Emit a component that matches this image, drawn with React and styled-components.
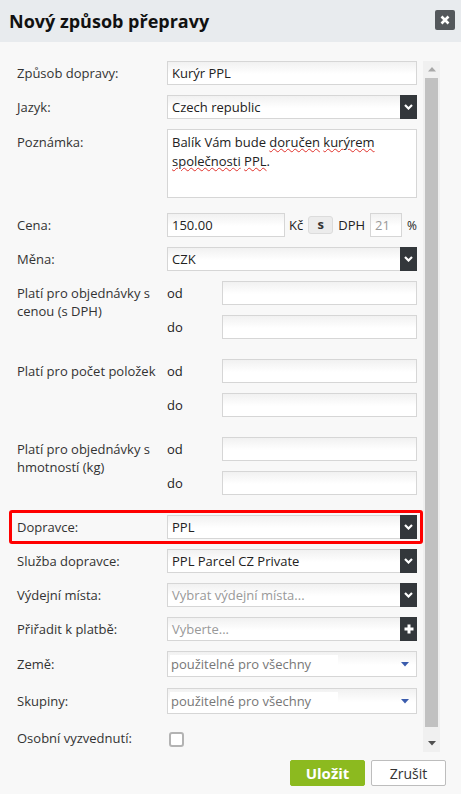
import React from "react";
import styled, { createGlobalStyle } from "styled-components";

const GlobalStyle = createGlobalStyle`
  html, body { margin: 0; padding: 0; background: #f8f8f8; }
  body { font-family: "Open Sans", "Noto Sans", sans-serif; color: #333; }
  * { box-sizing: border-box; }
`;

const Dialog = styled.div`
  width: 461px;
  height: 794px;
  background: #f8f8f8;
  display: flex;
  flex-direction: column;
`;

const Header = styled.header`
  height: 42px;
  flex: none;
  background: #e8ebee;
  display: flex;
  align-items: center;
  justify-content: space-between;
  padding: 0 6px 0 9px;
`;

const Title = styled.h1`
  margin: 0;
  font-size: 18px;
  font-weight: 700;
  color: #111;
`;

const CloseButton = styled.button`
  width: 20px;
  height: 20px;
  padding: 0;
  border: 0;
  border-radius: 2px;
  background: #54585c;
  display: flex;
  align-items: center;
  justify-content: center;
  margin-top: -2px;
`;

const Body = styled.div`
  display: flex;
  margin-top: 19px;
  height: 691px;
  padding-right: 21px;
`;

const Form = styled.div`
  flex: 1;
  padding: 0 6px 0 17px;
  display: flex;
  flex-direction: column;
`;

const Row = styled.div`
  display: grid;
  grid-template-columns: 150px 250px;
  margin-top: ${(p) => (p.$gap ?? 10)}px;
  &:first-child { margin-top: 0; }
`;

const Label = styled.label`
  font-size: 13px;
  line-height: 18px;
  padding-top: ${(p) => p.$pt ?? 3}px;
  color: #333;
`;

const fieldBg = "linear-gradient(to bottom, #f1f1f1 0%, #ffffff 55%)";

const TextInput = styled.input`
  width: ${(p) => p.$w ?? 250}px;
  height: 24px;
  border: 1px solid #d6d6d6;
  border-radius: 0;
  background: ${fieldBg};
  padding: 0 4px;
  font-family: inherit;
  font-size: 13px;
  color: ${(p) => (p.$muted ? "#999" : "#222")};
  outline: none;
  &::placeholder { color: #999; }
`;

const TextArea = styled.div`
  height: 69px;
  border: 1px solid #d6d6d6;
  background: #fff;
  padding: 3px 4px;
  font-size: 13px;
  line-height: 19px;
  color: #222;
`;

const Misspelled = styled.span`
  text-decoration: underline wavy #e0302a;
  text-decoration-thickness: 1px;
  text-underline-offset: 1px;
`;

const Select = styled.div`
  display: flex;
  height: 24px;
  border: 1px solid #d6d6d6;
  background: ${fieldBg};
`;

const SelectValue = styled.span`
  flex: 1;
  padding: 0 4px;
  line-height: 22px;
  font-size: 13px;
  color: ${(p) => (p.$placeholder ? "#999" : "#222")};
  white-space: nowrap;
  overflow: hidden;
`;

const SelectButton = styled.span`
  width: 17px;
  margin: -1px -1px -1px 0;
  background: #33373b;
  display: flex;
  align-items: center;
  justify-content: center;
`;

const PriceLine = styled.div`
  display: flex;
  align-items: center;
  font-size: 13px;
  color: #222;
`;

const Unit = styled.span`
  margin-left: ${(p) => p.$ml ?? 5}px;
  font-size: ${(p) => p.$size ?? 13}px;
`;

const SmallButton = styled.span`
  margin-left: 5px;
  width: 26px;
  height: 18px;
  border: 1px solid #dcdcdc;
  border-radius: 3px;
  background: #ececec;
  font-weight: 700;
  font-size: 13px;
  line-height: 15px;
  text-align: center;
  color: #333;
`;

const RangeList = styled.div`
  display: flex;
  flex-direction: column;
  gap: 10px;
`;

const RangeRow = styled.div`
  display: grid;
  grid-template-columns: 55px 195px;
  align-items: center;
`;

const RangeLabel = styled.span`
  font-size: 13px;
  color: #222;
`;

const Highlight = styled.div`
  margin: 15px -6px -5px -8px;
  border: 3px solid #ff0000;
  border-radius: 3px;
  padding: 2px 3px 2px 5px;
`;

const Chosen = styled.div`
  height: 26px;
  border: 1px solid #d6d6d6;
  background: ${fieldBg};
  display: flex;
  align-items: center;
  padding: 0 7px 0 2px;
`;

const ChosenInput = styled.span`
  width: 168px;
  height: 19px;
  background: #fff;
  color: #777;
  font-size: 13px;
  line-height: 19px;
  padding-left: 1px;
  white-space: nowrap;
`;

const ChosenArrow = styled.span`
  margin-left: auto;
  display: flex;
`;

const Checkbox = styled.span`
  display: block;
  width: 15px;
  height: 15px;
  margin: 6px 0 0 2px;
  border: 2px solid #b3b3b3;
  border-radius: 3px;
  background: #fff;
`;

const Scrollbar = styled.div`
  width: 17px;
  flex: none;
  background: #f0f0f0;
  display: flex;
  flex-direction: column;
  align-items: center;
`;

const ScrollArrow = styled.div`
  height: 17px;
  width: 100%;
  display: flex;
  align-items: center;
  justify-content: center;
`;

const ScrollThumb = styled.div`
  width: 13px;
  height: 649px;
  background: #c1c1c1;
`;

const ScrollSpacer = styled.div`
  flex: 1;
`;

const Footer = styled.footer`
  display: flex;
  justify-content: flex-end;
  gap: 6px;
  padding: 8px 15px 0 0;
`;

const Button = styled.button`
  width: 75px;
  height: 26px;
  border-radius: 2px;
  font-family: inherit;
  cursor: pointer;
  border: 1px solid ${(p) => (p.$primary ? "#8cba1f" : "#bdbdbd")};
  background: ${(p) => (p.$primary ? "#8cba1f" : "#fff")};
  color: ${(p) => (p.$primary ? "#fff" : "#333")};
  font-weight: ${(p) => (p.$primary ? 700 : 400)};
  font-size: ${(p) => (p.$primary ? 15 : 14)}px;
  padding: 0;
`;

const Chevron = () => (
  <svg width="9" height="6" viewBox="0 0 9 6">
    <polyline points="1,1 4.5,4.5 8,1" fill="none" stroke="#fff" strokeWidth="2.2" />
  </svg>
);

const Plus = () => (
  <svg width="10" height="10" viewBox="0 0 10 10">
    <path d="M5 0.5V9.5M0.5 5H9.5" stroke="#fff" strokeWidth="3" />
  </svg>
);

const Triangle = ({ dir = "down", color }) => (
  <svg width="8" height="5" viewBox="0 0 8 5">
    {dir === "down" ? (
      <polygon points="0,0 8,0 4,4.5" fill={color} />
    ) : (
      <polygon points="0,4.5 8,4.5 4,0" fill={color} />
    )}
  </svg>
);

const SelectField = ({ value, placeholder, icon = "chevron" }) => (
  <Select>
    <SelectValue $placeholder={!!placeholder}>{value || placeholder}</SelectValue>
    <SelectButton>{icon === "plus" ? <Plus /> : <Chevron />}</SelectButton>
  </Select>
);

const ChosenField = ({ text }) => (
  <Chosen>
    <ChosenInput>{text}</ChosenInput>
    <ChosenArrow>
      <Triangle dir="down" color="#3b5cad" />
    </ChosenArrow>
  </Chosen>
);

const Range = () => (
  <RangeList>
    <RangeRow>
      <RangeLabel>od</RangeLabel>
      <TextInput $w={195} readOnly />
    </RangeRow>
    <RangeRow>
      <RangeLabel>do</RangeLabel>
      <TextInput $w={195} readOnly />
    </RangeRow>
  </RangeList>
);

export default function App() {
  return (
    <>
      <GlobalStyle />
      <Dialog>
        <Header>
          <Title>Nový způsob přepravy</Title>
          <CloseButton aria-label="Zavřít">
            <svg width="10" height="10" viewBox="0 0 10 10">
              <path d="M1.5 1.5L8.5 8.5M8.5 1.5L1.5 8.5" stroke="#fff" strokeWidth="2.6" />
            </svg>
          </CloseButton>
        </Header>
        <Body>
          <Form>
            <Row>
              <Label>Způsob dopravy:</Label>
              <TextInput readOnly value="Kurýr PPL" />
            </Row>
            <Row>
              <Label>Jazyk:</Label>
              <SelectField value="Czech republic" />
            </Row>
            <Row>
              <Label $pt={4}>Poznámka:</Label>
              <TextArea>
                Balík Vám bude <Misspelled>doručen</Misspelled> <Misspelled>kurýrem</Misspelled>{" "}
                <Misspelled>společnosti</Misspelled> <Misspelled>PPL</Misspelled>.
              </TextArea>
            </Row>
            <Row $gap={15}>
              <Label>Cena:</Label>
              <PriceLine>
                <TextInput $w={118} readOnly value="150.00" />
                <Unit $ml={4}>Kč</Unit>
                <SmallButton>s</SmallButton>
                <Unit>DPH</Unit>
                <Unit as="span">
                  <TextInput $w={32} $muted readOnly value="21" />
                </Unit>
                <Unit $size={12}>%</Unit>
              </PriceLine>
            </Row>
            <Row>
              <Label>Měna:</Label>
              <SelectField value="CZK" />
            </Row>
            <Row>
              <Label>Platí pro objednávky s cenou (s DPH)</Label>
              <Range />
            </Row>
            <Row $gap={20}>
              <Label>Platí pro počet položek</Label>
              <Range />
            </Row>
            <Row $gap={20}>
              <Label>Platí pro objednávky s hmotností (kg)</Label>
              <Range />
            </Row>
            <Highlight>
              <Row>
                <Label>Dopravce:</Label>
                <SelectField value="PPL" />
              </Row>
            </Highlight>
            <Row>
              <Label>Služba dopravce:</Label>
              <SelectField value="PPL Parcel CZ Private" />
            </Row>
            <Row>
              <Label>Výdejní místa:</Label>
              <SelectField placeholder="Vybrat výdejní místa..." />
            </Row>
            <Row>
              <Label>Přiřadit k platbě:</Label>
              <SelectField placeholder="Vyberte..." icon="plus" />
            </Row>
            <Row>
              <Label $pt={4}>Země:</Label>
              <ChosenField text="použitelné pro všechny" />
            </Row>
            <Row $gap={11}>
              <Label $pt={4}>Skupiny:</Label>
              <ChosenField text="použitelné pro všechny" />
            </Row>
            <Row $gap={12}>
              <Label>Osobní vyzvednutí:</Label>
              <div>
                <Checkbox />
              </div>
            </Row>
          </Form>
          <Scrollbar>
            <ScrollArrow>
              <Triangle dir="up" color="#a8a8a8" />
            </ScrollArrow>
            <ScrollThumb />
            <ScrollSpacer />
            <ScrollArrow>
              <Triangle dir="down" color="#505050" />
            </ScrollArrow>
          </Scrollbar>
        </Body>
        <Footer>
          <Button $primary>Uložit</Button>
          <Button>Zrušit</Button>
        </Footer>
      </Dialog>
    </>
  );
}
